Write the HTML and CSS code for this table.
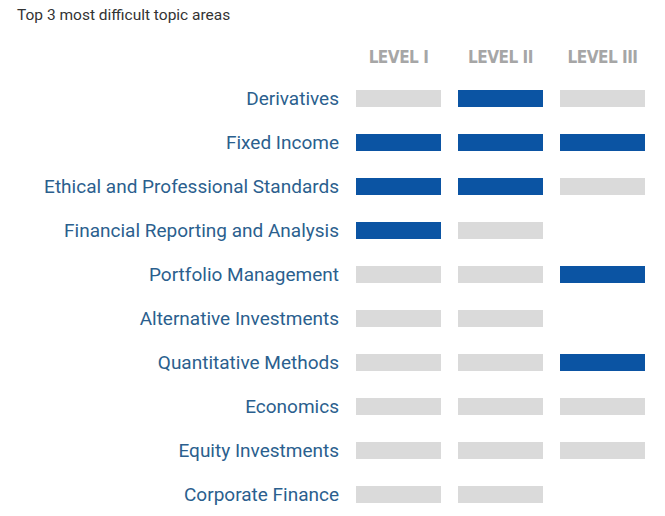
FILE: index.html
```html
<!DOCTYPE html>
<html>
<head>
<meta charset="utf-8">
<link rel="stylesheet" href="styles.css">
</head>
<body>
<div class="title">Top 3 most difficult topic areas</div>
<div class="chart">
  <div class="head"></div>
  <div class="head lvl">LEVEL I</div>
  <div class="head lvl">LEVEL II</div>
  <div class="head lvl">LEVEL III</div>

  <div class="label">Derivatives</div>
  <div class="cell"><span class="bar"></span></div>
  <div class="cell"><span class="bar on"></span></div>
  <div class="cell"><span class="bar"></span></div>

  <div class="label">Fixed Income</div>
  <div class="cell"><span class="bar on"></span></div>
  <div class="cell"><span class="bar on"></span></div>
  <div class="cell"><span class="bar on"></span></div>

  <div class="label">Ethical and Professional Standards</div>
  <div class="cell"><span class="bar on"></span></div>
  <div class="cell"><span class="bar on"></span></div>
  <div class="cell"><span class="bar"></span></div>

  <div class="label">Financial Reporting and Analysis</div>
  <div class="cell"><span class="bar on"></span></div>
  <div class="cell"><span class="bar"></span></div>
  <div class="cell"></div>

  <div class="label">Portfolio Management</div>
  <div class="cell"><span class="bar"></span></div>
  <div class="cell"><span class="bar"></span></div>
  <div class="cell"><span class="bar on"></span></div>

  <div class="label">Alternative Investments</div>
  <div class="cell"><span class="bar"></span></div>
  <div class="cell"><span class="bar"></span></div>
  <div class="cell"></div>

  <div class="label">Quantitative Methods</div>
  <div class="cell"><span class="bar"></span></div>
  <div class="cell"><span class="bar"></span></div>
  <div class="cell"><span class="bar on"></span></div>

  <div class="label">Economics</div>
  <div class="cell"><span class="bar"></span></div>
  <div class="cell"><span class="bar"></span></div>
  <div class="cell"><span class="bar"></span></div>

  <div class="label">Equity Investments</div>
  <div class="cell"><span class="bar"></span></div>
  <div class="cell"><span class="bar"></span></div>
  <div class="cell"><span class="bar"></span></div>

  <div class="label">Corporate Finance</div>
  <div class="cell"><span class="bar"></span></div>
  <div class="cell"><span class="bar"></span></div>
  <div class="cell"></div>
</div>
</body>
</html>
```
FILE: styles.css
```css
html, body {
  margin: 0;
  padding: 0;
  background: #ffffff;
}
body {
  width: 665px;
  height: 516px;
  overflow: hidden;
}
.title {
  font-family: Roboto, "Liberation Sans", sans-serif;
  font-size: 15.5px;
  color: #333333;
  padding: 6px 0 0 17px;
  line-height: 18px;
}
.chart {
  display: grid;
  grid-template-columns: 339px 85px 85px 85px;
  column-gap: 17px;
  grid-auto-rows: 44px;
  margin-top: 8px;
}
.head {
  height: 44px;
  box-sizing: border-box;
}
.lvl {
  font-family: "DejaVu Sans Condensed", "DejaVu Sans", sans-serif;
  font-stretch: condensed;
  font-weight: bold;
  font-size: 17px;
  letter-spacing: -0.5px;
  color: #a6a6a6;
  text-align: center;
  padding-top: 6px;
  line-height: 38px;
}
.label {
  font-family: Roboto, "Liberation Sans", sans-serif;
  font-size: 19px;
  color: #2b5f8e;
  text-align: right;
  display: flex;
  align-items: center;
  justify-content: flex-end;
  white-space: nowrap;
}
.cell {
  display: flex;
  align-items: center;
}
.bar {
  display: block;
  width: 85px;
  height: 17px;
  background: #dadada;
}
.bar.on {
  background: #0b54a3;
}
```
